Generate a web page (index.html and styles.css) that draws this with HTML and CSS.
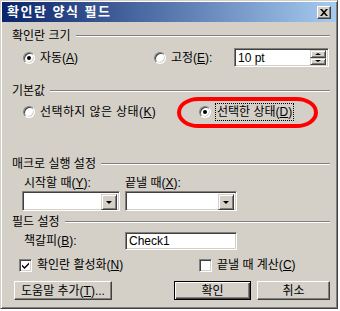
FILE: index.html
```html
<!DOCTYPE html>
<html lang="ko">
<head>
    <meta charset="UTF-8">
    <title>확인란 양식 필드</title>
    <link rel="stylesheet" href="styles.css">
</head>
<body>
    <div class="dialog">
        <div class="titlebar">
            <span class="title">확인란 양식 필드</span>
            <span class="close">
                <svg width="8" height="7" viewBox="0 0 8 7"><path d="M0 0h2l2 2.2L6 0h2L5 3.5 8 7H6L4 4.8 2 7H0l3-3.5z" fill="#000"/></svg>
            </span>
        </div>

        <div class="content">
            <!-- 확인란 크기 -->
            <div class="legend"><span>확인란 크기</span><i class="rule"></i></div>
            <div class="row size-row">
                <label class="opt auto"><span class="radio on"></span><span>자동(<u>A</u>)</span></label>
                <label class="opt fixed"><span class="radio"></span><span>고정(<u>E</u>):</span></label>
                <div class="field spin">
                    <span class="spin-text">10 pt</span>
                    <div class="spin-btns">
                        <b class="mini"><i class="arrow up"></i></b>
                        <b class="mini"><i class="arrow down"></i></b>
                    </div>
                </div>
            </div>

            <!-- 기본값 -->
            <div class="legend default-legend"><span>기본값</span><i class="rule"></i></div>
            <div class="row default-row">
                <label class="opt unchecked"><span class="radio"></span><span>선택하지 않은 상태(<u>K</u>)</span></label>
                <label class="opt"><span class="radio on"></span><span class="focus">선택한 상태(<u>D</u>)</span></label>
            </div>

            <!-- 매크로 실행 설정 -->
            <div class="legend macro-legend"><span>매크로 실행 설정</span><i class="rule"></i></div>
            <div class="row labels-row">
                <span class="entry-label">시작할 때(<u>Y</u>):</span>
                <span>끝낼 때(<u>X</u>):</span>
            </div>
            <div class="row combos-row">
                <div class="field combo first"><b class="mini drop"><i class="arrow down"></i></b></div>
                <div class="field combo second"><b class="mini drop"><i class="arrow down"></i></b></div>
            </div>

            <!-- 필드 설정 -->
            <div class="legend field-legend"><span>필드 설정</span><i class="rule"></i></div>
            <div class="row bookmark-row">
                <span class="entry-label">책갈피(<u>B</u>):</span>
                <div class="field bookmark">Check1</div>
            </div>
            <div class="row checks-row">
                <label class="opt enable"><span class="check on">
                    <svg width="7" height="7" viewBox="0 0 7 7"><path d="M0 2.5l2.5 2.5L7 0.5V2.5L2.5 7 0 4.5z" fill="#000"/></svg>
                </span><span>확인란 활성화(<u>N</u>)</span></label>
                <label class="opt"><span class="check"></span><span>끝낼 때 계산(<u>C</u>)</span></label>
            </div>

            <div class="row buttons-row">
                <button class="btn help">도움말 추가(<u>T</u>)...</button>
                <button class="btn ok">확인</button>
                <button class="btn cancel">취소</button>
            </div>
        </div>

        <!-- 강조 표시 -->
        <div class="highlight"></div>
    </div>
</body>
</html>
```

FILE: styles.css
```css
html, body {
    margin: 0;
    padding: 0;
    background: #fff;
}

body {
    font-family: "Liberation Sans", "Noto Sans CJK KR", sans-serif;
    font-size: 12px;
    line-height: 14px;
    color: #000;
}

/* 창 틀 */
.dialog {
    position: relative;
    width: 338px;
    height: 309px;
    box-sizing: border-box;
    padding: 1px;
    background: #d4d0c8;
    border: 1px solid;
    border-color: #d4d0c8 #404040 #404040 #d4d0c8;
    box-shadow: inset 1px 1px #fff, inset -1px -1px #808080;
}

.titlebar {
    height: 20px;
    display: flex;
    align-items: center;
    justify-content: space-between;
    padding: 0 5px 0 5px;
    background: linear-gradient(to right, #0a246a, #a6caf0);
}

.title {
    color: #fff;
    font-weight: bold;
    font-size: 13px;
    letter-spacing: 1.5px;
}

.close {
    width: 14px;
    height: 13px;
    box-sizing: border-box;
    display: flex;
    align-items: center;
    justify-content: center;
    background: #d4d0c8;
    border: 1px solid;
    border-color: #fff #404040 #404040 #fff;
    box-shadow: inset -1px -1px #808080;
}

.content {
    padding: 7px 6px 0 10px;
}

/* 그룹 제목 + 구분선 */
.legend {
    height: 14px;
    display: flex;
    align-items: center;
    gap: 5px;
}

.rule {
    flex: 1;
    height: 0;
    border-top: 1px solid #808080;
    border-bottom: 1px solid #fff;
}

.default-legend { margin-top: 17px; }
.macro-legend { margin-top: 36px; }
.field-legend { margin-top: 4px; }

.row {
    display: flex;
    align-items: center;
}

.opt {
    display: flex;
    align-items: center;
    gap: 5px;
    white-space: nowrap;
}

/* 라디오 / 체크 */
.radio {
    position: relative;
    width: 12px;
    height: 12px;
    box-sizing: border-box;
    border-radius: 50%;
    background: #fff;
    border: 1px solid;
    border-color: #808080 #fff #fff #808080;
    box-shadow: inset 1px 1px #404040, inset -1px -1px #d4d0c8;
}

.radio.on::after {
    content: "";
    position: absolute;
    left: 3px;
    top: 3px;
    width: 4px;
    height: 4px;
    border-radius: 50%;
    background: #000;
}

.check {
    width: 13px;
    height: 13px;
    box-sizing: border-box;
    display: flex;
    align-items: center;
    justify-content: center;
    background: #fff;
    border: 1px solid;
    border-color: #808080 #fff #fff #808080;
    box-shadow: inset 1px 1px #404040, inset -1px -1px #d4d0c8;
}

/* 입력 칸 */
.field {
    box-sizing: border-box;
    background: #fff;
    border: 1px solid;
    border-color: #808080 #fff #fff #808080;
    box-shadow: inset 1px 1px #404040, inset -1px -1px #d4d0c8;
}

.mini {
    display: flex;
    align-items: center;
    justify-content: center;
    box-sizing: border-box;
    background: #d4d0c8;
    border: 1px solid;
    border-color: #d4d0c8 #404040 #404040 #d4d0c8;
    box-shadow: inset 1px 1px #fff, inset -1px -1px #808080;
}

.arrow {
    width: 0;
    height: 0;
    border-left: 3px solid transparent;
    border-right: 3px solid transparent;
}

.arrow.up { border-bottom: 2px solid #000; }
.arrow.down { border-top: 3px solid #000; }

.size-row {
    margin-top: 5px;
    margin-left: 11px;
    height: 19px;
}

.auto { width: 131px; }
.fixed { width: 80px; }

.spin {
    width: 95px;
    height: 19px;
    display: flex;
    align-items: center;
    justify-content: space-between;
    padding: 2px;
}

.spin-text {
    padding-left: 1px;
}

.spin-btns {
    display: flex;
    flex-direction: column;
    width: 16px;
    height: 15px;
}

.spin-btns .mini {
    height: 7.5px;
}

.spin-btns .arrow.down { border-top-width: 2px; }

.default-row {
    margin-top: 5px;
    margin-left: 11px;
    height: 18px;
}

.unchecked {
    width: 176px;
    letter-spacing: 0.4px;
}

.focus {
    padding: 1px 1px;
    outline: 1px dotted #000;
    outline-offset: 0;
}

.labels-row {
    margin-top: 5px;
    margin-left: 12px;
    height: 14px;
}

.entry-label { width: 101px; }

.combos-row {
    margin-top: 1px;
    margin-left: 10px;
    height: 20px;
    gap: 5px;
}

.combo {
    height: 20px;
    display: flex;
    justify-content: flex-end;
    padding: 2px;
}

.combo.first { width: 98px; }
.combo.second { width: 112px; }

.drop {
    width: 16px;
    height: 16px;
}

.bookmark-row {
    margin-top: 3px;
    margin-left: 12px;
    height: 18px;
}

.bookmark {
    width: 112px;
    height: 18px;
    padding: 1px 3px;
    line-height: 15px;
}

.checks-row {
    margin-top: 8px;
    margin-left: 7px;
    height: 14px;
}

.enable { width: 180px; }

.buttons-row {
    margin-top: 9px;
    margin-left: 2px;
    height: 19px;
}

.btn {
    height: 19px;
    box-sizing: border-box;
    padding: 0;
    font: inherit;
    color: #000;
    background: #d4d0c8;
    border: 1px solid;
    border-color: #fff #404040 #404040 #fff;
    box-shadow: inset -1px -1px #808080;
}

.help { width: 98px; }

.ok {
    width: 77px;
    margin-left: 62px;
    border: 1px solid #000;
    box-shadow: inset 1px 1px #fff, inset -1px -1px #404040, inset -2px -2px #808080;
}

.cancel {
    width: 73px;
    margin-left: 6px;
}

/* 빨간 강조 타원 */
.highlight {
    position: absolute;
    left: 176px;
    top: 96px;
    width: 141px;
    height: 31px;
    box-sizing: border-box;
    border: 4px solid #f00;
    border-radius: 22px / 16px;
}
```
